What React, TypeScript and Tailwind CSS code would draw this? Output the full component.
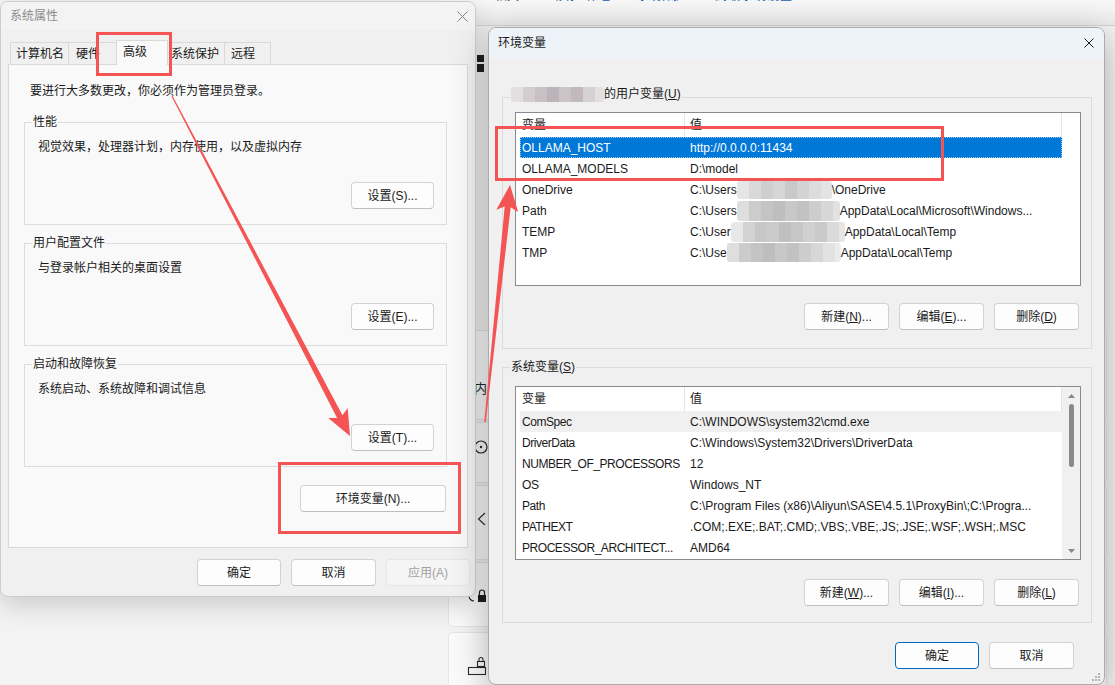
import React from "react";

const F = "font-['Liberation_Sans','Noto_Sans_CJK_SC',sans-serif]";

type BtnKind = "normal" | "primary" | "disabled";

function Btn({ children, w = "w-[85px]", kind = "normal" }: { children: React.ReactNode; w?: string; kind?: BtnKind }) {
  const look =
    kind === "primary"
      ? "bg-[#fdfdfd] border-[#0067c0] text-[#1a1a1a]"
      : kind === "disabled"
      ? "bg-[#f5f5f5] border-[#e6e6e6] text-[#a2a2a2]"
      : "bg-[#fdfdfd] border-[#d2d2d2] border-b-[#bfbfbf] text-[#1a1a1a]";
  return (
    <div className={`h-[27px] ${w} shrink-0 rounded-[4px] border flex items-center justify-center whitespace-nowrap ${look}`}>
      {children}
    </div>
  );
}

function CloseX({ stroke, size }: { stroke: string; size: number }) {
  return (
    <svg width={size} height={size} viewBox={`0 0 ${size} ${size}`}>
      <path d={`M0.5 0.5 L${size - 0.5} ${size - 0.5} M${size - 0.5} 0.5 L0.5 ${size - 0.5}`} stroke={stroke} strokeWidth="1" />
    </svg>
  );
}

function Mosaic({ cells, w, h = "h-[18px]" }: { cells: string[]; w: string; h?: string }) {
  return (
    <div className={`flex shrink-0 overflow-hidden rounded-[3px] ${w} ${h}`}>
      {cells.map((c, i) => (
        <div key={i} className={`w-[12px] shrink-0 h-full ${c}`} />
      ))}
    </div>
  );
}

const greyA = ["bg-[#e6e6e6]", "bg-[#d9d9d9]", "bg-[#cfcfcf]", "bg-[#d6d6d6]", "bg-[#c9c9c9]", "bg-[#d3d3d3]", "bg-[#dcdcdc]", "bg-[#e4e4e4]", "bg-[#eaeaea]", "bg-[#efefef]"];
const greyB = ["bg-[#dedede]", "bg-[#cccccc]", "bg-[#c4c4c4]", "bg-[#bebebe]", "bg-[#c8c8c8]", "bg-[#c2c2c2]", "bg-[#cdcdcd]", "bg-[#d7d7d7]", "bg-[#e2e2e2]", "bg-[#ececec]"];
const greyC = ["bg-[#e8e8e8]", "bg-[#d2d2d2]", "bg-[#c7c7c7]", "bg-[#cbcbcb]", "bg-[#c0c0c0]", "bg-[#c6c6c6]", "bg-[#d0d0d0]", "bg-[#c9c9c9]", "bg-[#dadada]", "bg-[#e6e6e6]"];
const pinkish = ["bg-[#e2dfe0]", "bg-[#d3cdd0]", "bg-[#c8c0c4]", "bg-[#bdb4b9]", "bg-[#cbc4c7]", "bg-[#c1b9bd]", "bg-[#d6d1d3]", "bg-[#e3e0e1]"];

type Row = { name: string; value: React.ReactNode; state?: "sel" | "hover" };

function VarList({ rows, scroll, nameClass = "" }: { rows: Row[]; scroll?: boolean; nameClass?: string }) {
  return (
    <div className="w-[566px] h-[174px] shrink-0 border border-[#8b8b8b] bg-white flex overflow-hidden">
      <div className="w-[546px] pl-[4px] flex flex-col">
        <div className="h-[24px] flex shrink-0">
          <div className="w-[164px] pl-[2px] flex items-center">变量</div>
          <div className="w-[378px] border-l border-r border-[#e5e5e5] pl-[5px] flex items-center">值</div>
        </div>
        {rows.map((r) => (
          <div
            key={r.name}
            className={`h-[21px] flex shrink-0 items-center ${
              r.state === "sel"
                ? "bg-[#0078d7] text-white outline-1 outline-dotted -outline-offset-1 outline-[#9cc6f2]"
                : r.state === "hover"
                ? "bg-[#f0f0f0]"
                : ""
            }`}
          >
            <div className={`w-[164px] pl-[2px] whitespace-nowrap overflow-hidden ${nameClass}`}>{r.name}</div>
            <div className="w-[378px] pl-[6px] whitespace-nowrap overflow-hidden flex items-center">{r.value}</div>
          </div>
        ))}
      </div>
      {scroll ? (
        <div className="w-[18px] bg-[#f0f0f0] flex flex-col items-center pt-[7px] pb-[6px]">
          <svg width="7" height="4" viewBox="0 0 7 4">
            <path d="M0 4 L3.5 0 L7 4Z" fill="#878787" />
          </svg>
          <div className="mt-[6px] w-[5px] h-[63px] rounded-full bg-[#8a8a8a]" />
          <div className="flex-1" />
          <svg width="7" height="4" viewBox="0 0 7 4">
            <path d="M0 0 L3.5 4 L7 0Z" fill="#878787" />
          </svg>
        </div>
      ) : null}
    </div>
  );
}

function BackgroundWindow() {
  return (
    <div className="absolute left-[440px] top-0 w-[675px] h-[685px] flex flex-col bg-[#f3f3f3]">
      <div className="h-[26px] shrink-0 bg-gradient-to-b from-[#f8f8f8] to-[#ebebeb] border-b border-[#d5d5d5] overflow-hidden">
        <div className="flex -mt-[12px] whitespace-nowrap">
          <span className="ml-[55px] text-[#444444]">相关</span>
          <span className="ml-[31px] text-[#1d5fb0]">域或工作组</span>
          <span className="ml-[27px] text-[#1d5fb0]">系统保护</span>
          <span className="ml-[30px] text-[#1d5fb0] tracking-[1px]">高级系统设置</span>
        </div>
      </div>
      <div className="flex flex-col gap-[2px] px-[8px] pt-[304px]">
        <div className="h-[90px] bg-[#fbfbfb] border border-[#e5e5e5] rounded-[5px]" />
        <div className="h-[61px] bg-[#fbfbfb] border border-[#e5e5e5] rounded-[5px]" />
        <div className="h-[75px] bg-[#fbfbfb] border border-[#e5e5e5] rounded-[5px]" />
        <div className="h-[65px] bg-[#fbfbfb] border border-[#e5e5e5] rounded-[5px]" />
        <div className="mt-[3px] h-[80px] bg-[#fbfbfb] border border-[#e5e5e5] rounded-[5px]" />
      </div>
      <svg className="absolute left-0 top-0" width="675" height="685" viewBox="440 0 675 685">
        <rect x="477" y="55" width="7" height="7" fill="#202020" />
        <rect x="477" y="64" width="7" height="8" fill="#202020" />
        <text x="474" y="393" fontSize="13" fill="#2a2a2a" fontFamily="Noto Sans CJK SC">内</text>
        <circle cx="481" cy="447" r="6" fill="none" stroke="#2a2a2a" strokeWidth="1.2" />
        <circle cx="481" cy="447" r="1.2" fill="#2a2a2a" />
        <path d="M485 513 L478.5 519 L485 525" fill="none" stroke="#2a2a2a" strokeWidth="1.1" />
        <path d="M474 591 a5 5 0 0 0 0 10" fill="none" stroke="#2a2a2a" strokeWidth="1.2" />
        <rect x="478" y="595" width="8" height="7" fill="#1e1e1e" />
        <path d="M479.5 595 v-2.5 a2.5 2.5 0 0 1 5 0 v2.5" fill="none" stroke="#1e1e1e" strokeWidth="1.2" />
        <rect x="468.5" y="667.5" width="17" height="7" fill="none" stroke="#2a2a2a" strokeWidth="1.1" />
        <rect x="477.5" y="661.5" width="7" height="5" fill="none" stroke="#2a2a2a" strokeWidth="1.1" />
        <path d="M479 661.5 v-2 a2 2 0 0 1 4 0 v2" fill="none" stroke="#2a2a2a" strokeWidth="1.1" />
      </svg>
    </div>
  );
}

function LeftGroup({ label, text, button }: { label: string; text: string; button: string }) {
  return (
    <div className="relative w-[423px] h-[103px] shrink-0 border border-[#dcdcdc] flex flex-col pt-[16px] px-[12px]">
      <div className="absolute -top-[9px] left-[7px] px-[1px] bg-[#f9f9f9]">{label}</div>
      <div className="pl-[1px]">{text}</div>
      <div className="mt-[27px] self-end">
        <Btn w="w-[83px]">{button}</Btn>
      </div>
    </div>
  );
}

function SystemProperties() {
  const tab = "h-[22px] border border-b-0 border-[#d9d9d9] bg-[#f0f0f0] flex items-center shrink-0";
  return (
    <div className="absolute left-0 top-[1px] w-[476px] h-[596px] flex flex-col rounded-[8px] border border-[#cdcdcd] bg-[#f0f0f0] shadow-[0_8px_26px_rgba(0,0,0,0.17)] overflow-hidden">
      <div className="h-[28px] shrink-0 bg-[#f3f3f3] flex items-center justify-between pl-[9px] pr-[7px]">
        <span className="text-[#8c8c8c]">系统属性</span>
        <CloseX stroke="#858585" size={11} />
      </div>
      <div className="flex-1 flex flex-col px-[7px] pt-[10px]">
        <div className="flex items-end h-[24px] pl-[2px]">
          <div className={`${tab} w-[59px] pl-[5px]`}>计算机名</div>
          <div className={`${tab} -ml-[1px] w-[50px] pl-[7px]`}>硬件</div>
          <div className="relative z-10 -ml-[2px] -mb-[1px] w-[52px] h-[25px] shrink-0 border border-b-0 border-[#d9d9d9] bg-[#f9f9f9] pl-[6px] pt-[3px]">高级</div>
          <div className={`${tab} -ml-[1px] w-[58px] pl-[3px]`}>系统保护</div>
          <div className={`${tab} -ml-[1px] w-[47px] pl-[6px]`}>远程</div>
        </div>
        <div className="w-[460px] h-[484px] shrink-0 border border-[#d9d9d9] bg-[#f9f9f9] flex flex-col px-[15px]">
          <div className="mt-[18px] pl-[6px]">要进行大多数更改，你必须作为管理员登录。</div>
          <div className="mt-[23px]">
            <LeftGroup label="性能" text="视觉效果，处理器计划，内存使用，以及虚拟内存" button="设置(S)..." />
          </div>
          <div className="mt-[18px]">
            <LeftGroup label="用户配置文件" text="与登录帐户相关的桌面设置" button="设置(E)..." />
          </div>
          <div className="mt-[18px]">
            <LeftGroup label="启动和故障恢复" text="系统启动、系统故障和调试信息" button="设置(T)..." />
          </div>
          <div className="mt-[18px] self-end mr-[6px]">
            <Btn w="w-[146px]">环境变量(N)...</Btn>
          </div>
        </div>
        <div className="mt-[11px] flex justify-end gap-[10px] -mr-[2px]">
          <Btn w="w-[84px]">确定</Btn>
          <Btn w="w-[85px]">取消</Btn>
          <Btn w="w-[84px]" kind="disabled">应用(A)</Btn>
        </div>
      </div>
    </div>
  );
}

const userRows: Row[] = [
  { name: "OLLAMA_HOST", value: "http://0.0.0.0:11434", state: "sel" },
  { name: "OLLAMA_MODELS", value: "D:\\model" },
  {
    name: "OneDrive",
    value: (
      <>
        <span>C:\Users</span>
        <Mosaic cells={greyA} w="w-[95px]" />
        <span>\OneDrive</span>
      </>
    ),
  },
  {
    name: "Path",
    value: (
      <>
        <span>C:\Users</span>
        <Mosaic cells={greyB} w="w-[103px]" h="h-[20px]" />
        <span>AppData\Local\Microsoft\Windows...</span>
      </>
    ),
  },
  {
    name: "TEMP",
    value: (
      <>
        <span>C:\User</span>
        <Mosaic cells={greyC} w="w-[114px]" h="h-[20px]" />
        <span>AppData\Local\Temp</span>
      </>
    ),
  },
  {
    name: "TMP",
    value: (
      <>
        <span>C:\Use</span>
        <Mosaic cells={greyB} w="w-[114px]" h="h-[19px]" />
        <span>AppData\Local\Temp</span>
      </>
    ),
  },
];

const sysRows: Row[] = [
  { name: "ComSpec", value: "C:\\WINDOWS\\system32\\cmd.exe", state: "hover" },
  { name: "DriverData", value: "C:\\Windows\\System32\\Drivers\\DriverData" },
  { name: "NUMBER_OF_PROCESSORS", value: "12" },
  { name: "OS", value: "Windows_NT" },
  { name: "Path", value: "C:\\Program Files (x86)\\Aliyun\\SASE\\4.5.1\\ProxyBin\\;C:\\Progra..." },
  { name: "PATHEXT", value: ".COM;.EXE;.BAT;.CMD;.VBS;.VBE;.JS;.JSE;.WSF;.WSH;.MSC" },
  { name: "PROCESSOR_ARCHITECT...", value: "AMD64" },
];

function EnvVars() {
  return (
    <div className="absolute left-[488px] top-[27px] w-[617px] h-[658px] flex flex-col rounded-[8px] border border-[#ababab] bg-[#f0f0f0] shadow-[0_10px_36px_rgba(0,0,0,0.3)] overflow-hidden">
      <div className="h-[30px] shrink-0 bg-[#eef2f9] flex items-center justify-between pl-[9px] pr-[10px]">
        <span>环境变量</span>
        <CloseX stroke="#1a1a1a" size={10} />
      </div>
      <div className="flex-1 flex flex-col px-[13px]">
        <div className="relative mt-[39px] w-[590px] h-[252px] shrink-0 border border-[#dcdcdc] flex flex-col px-[12px] pt-[14px]">
          <div className="absolute -top-[12px] left-[7px] px-[1px] bg-[#f0f0f0] flex items-center">
            <Mosaic cells={pinkish} w="w-[93px]" h="h-[15px]" />
            <span>
              的用户变量(<u className="underline">U</u>)
            </span>
          </div>
          <VarList rows={userRows} />
          <div className="mt-[17px] flex justify-end gap-[10px]">
            <Btn>
              新建(<u className="underline">N</u>)...
            </Btn>
            <Btn>
              编辑(<u className="underline">E</u>)...
            </Btn>
            <Btn>
              删除(<u className="underline">D</u>)
            </Btn>
          </div>
        </div>
        <div className="relative mt-[18px] w-[590px] h-[256px] shrink-0 border border-[#dcdcdc] flex flex-col px-[12px] pt-[18px]">
          <div className="absolute -top-[9px] left-[7px] px-[1px] bg-[#f0f0f0]">
            系统变量(<u className="underline">S</u>)
          </div>
          <VarList rows={sysRows} scroll nameClass="tracking-[-0.45px]" />
          <div className="mt-[19px] flex justify-end gap-[10px]">
            <Btn>
              新建(<u className="underline">W</u>)...
            </Btn>
            <Btn>
              编辑(<u className="underline">I</u>)...
            </Btn>
            <Btn>
              删除(<u className="underline">L</u>)
            </Btn>
          </div>
        </div>
        <div className="mt-[19px] flex justify-end gap-[10px] pr-[17px]">
          <Btn w="w-[84px]" kind="primary">确定</Btn>
          <Btn>取消</Btn>
        </div>
      </div>
      <svg className="absolute right-[3px] bottom-[2px]" width="10" height="10" viewBox="0 0 10 10">
        <rect x="7" y="1" width="2" height="2" fill="#b5b5b5" />
        <rect x="4" y="4" width="2" height="2" fill="#b5b5b5" />
        <rect x="7" y="4" width="2" height="2" fill="#b5b5b5" />
        <rect x="1" y="7" width="2" height="2" fill="#b5b5b5" />
        <rect x="4" y="7" width="2" height="2" fill="#b5b5b5" />
        <rect x="7" y="7" width="2" height="2" fill="#b5b5b5" />
      </svg>
    </div>
  );
}

function Annotations() {
  const box = "absolute border-[3px] border-[#f45454]";
  return (
    <div className="absolute inset-0 pointer-events-none">
      <div className={`${box} left-[96px] top-[32px] w-[76px] h-[44px]`} />
      <div className={`${box} left-[278px] top-[462px] w-[183px] h-[72px]`} />
      <div className={`${box} left-[495px] top-[126px] w-[449px] h-[55px]`} />
      <svg className="absolute left-0 top-0" width="1115" height="685" viewBox="0 0 1115 685">
        <polygon
          points="172.53,95.72 342.46,415.13 347.69,407.88 350,436 328.21,418.08 337.14,417.91 171.47,96.28"
          fill="#f45454"
        />
        <polygon
          points="485.75,422.08 510.67,207.19 518.21,212.01 510,185 496.33,209.71 504.71,206.57 484.25,421.92"
          fill="#f45454"
        />
      </svg>
    </div>
  );
}

export default function App() {
  return (
    <div className={`relative w-[1115px] h-[685px] overflow-hidden bg-[#f3f3f3] text-[12px] leading-[16px] text-[#1a1a1a] ${F}`}>
      <BackgroundWindow />
      <SystemProperties />
      <EnvVars />
      <Annotations />
    </div>
  );
}
